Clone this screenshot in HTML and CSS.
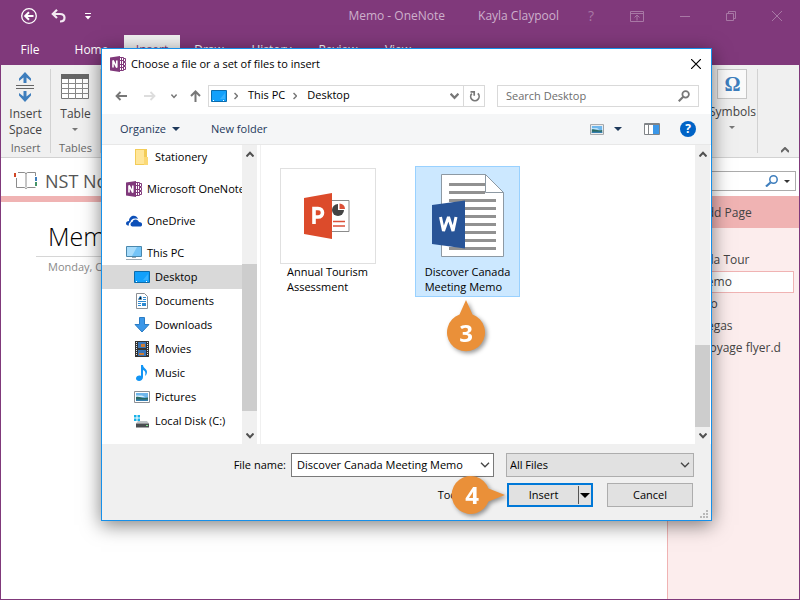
FILE: index.html
```html
<!DOCTYPE html>
<html lang="en">
<head>
<meta charset="utf-8">
<title>Memo - OneNote</title>
<link rel="stylesheet" href="styles.css">
</head>
<body>
<svg class="defs" aria-hidden="true">
  <symbol id="onenote" viewBox="0 0 16 16">
    <path fill="#fff" stroke="#80397b" d="M9 1.500h4.500v13H9"/>
    <path stroke="#80397b" d="M10 4.500h3.500M10 8.500h3.500M10 11.500h3.500M11.500 2v12" fill="none"/>
    <path fill="#fff" stroke="#80397b" d="M13.500 2.500h2v3h-2zM13.500 6.500h2v3h-2zM13.500 10.500h2v3h-2z"/>
    <path fill="#80397b" d="M0 1.500 10 0v16L0 14.500z"/>
    <path fill="none" stroke="#fff" stroke-width="1.600" d="M3 11.500V4.500l3.800 7V4.500"/>
  </symbol>
  <symbol id="chevron" viewBox="0 0 10 6"><path d="M1 .8 5 4.800 9 .8" fill="none" stroke="currentColor" stroke-width="1.300"/></symbol>
  <symbol id="bold-chevron" viewBox="0 0 8 6"><path d="M.5.5 4 4.200 7.500.5" fill="none" stroke="currentColor" stroke-width="2"/></symbol>
  <symbol id="caret" viewBox="0 0 8 4"><path d="M0 0h8L4 4z" fill="currentColor"/></symbol>
  <symbol id="desktop" viewBox="0 0 16 12"><path fill="#12a0fb" stroke="#0b6cad" d="M.5.5h15v11H.5z"/><path fill="#35b1ff" d="M9 9 14 3v6z"/><path stroke="#fff" stroke-dasharray="1 1" d="M2 10.500h2m8 0h2"/></symbol>
  <symbol id="picture" viewBox="0 0 16 12"><path fill="#fff" stroke="#8b8f94" d="M.5.5h15v11H.5z"/><path fill="#6fb7ec" d="M2 2h12v5H2z"/><path fill="#d8effc" d="M2 4.500h6l3 1.500H2z"/><path fill="#2a6a63" d="M2 6c4-1 5 2 12 .5V10H2z"/><path fill="#357fb0" d="M2 8.500h12V10H2z"/></symbol>
</svg>

<div class="app">
  <header class="titlebar">
    <div class="quick">
      <button aria-label="Back"><svg width="18" height="18" viewBox="0 0 18 18" fill="none" stroke="#fff"><circle cx="9" cy="9" r="7.300" stroke-width="1.300"/><path d="M13.500 9H5.500M9 5.200 5.200 9 9 12.800" stroke-width="2"/></svg></button>
      <button aria-label="Undo"><svg width="16" height="14" viewBox="0 0 16 14" fill="none" stroke="#f3e9f2" stroke-width="2.200"><path d="M2 5h7c6 0 6 7.500 0 7.500M6 .8 1.800 5 6 9"/></svg></button>
      <button aria-label="Customize"><svg width="6" height="7" viewBox="0 0 6 7" fill="#fff"><path d="M0 0h6v1H0zM0 3h6L3 6.500z"/></svg></button>
    </div>
    <span class="caption">Memo - OneNote</span>
    <span class="user">Kayla Claypool</span>
    <div class="winbtns">
      <button aria-label="Help" class="q">?</button>
      <button aria-label="Ribbon options"><svg width="14" height="11" viewBox="0 0 14 11" fill="none" stroke="currentColor"><path d="M.5.5h13v10H.5zM.5 2.500h13M7 9.500V4.500M4.500 6.500 7 4l2.500 2.500"/></svg></button>
      <button aria-label="Minimize"><svg width="10" height="11" viewBox="0 0 10 11" stroke="currentColor"><path d="M0 5.500h10"/></svg></button>
      <button aria-label="Restore"><svg width="10" height="10" viewBox="0 0 10 10" fill="none" stroke="currentColor"><path d="M.5 2.500h7v7h-7zM2.500 2.500v-2h7v7h-2"/></svg></button>
      <button aria-label="Close"><svg width="10" height="10" viewBox="0 0 10 10" stroke="currentColor"><path d="M0 0 10 10M10 0 0 10"/></svg></button>
    </div>
  </header>
  <nav class="tabs">
    <a href="#">File</a><a href="#">Home</a><a href="#" class="on">Insert</a><a href="#">Draw</a><a href="#">History</a><a href="#">Review</a><a href="#">View</a>
  </nav>
  <section class="ribbon">
    <div class="group">
      <button class="big"><svg width="18" height="32" viewBox="0 0 18 32"><path fill="#3e7ebd" d="M9 1 15 7.500v2.500l-4.500-3.500V12h-3V6.500L3 10V7.500zM9 31l6-6.500V22l-4.500 3.500V20h-3v5.500L3 22v2.500z"/><path stroke="#666" d="M0 14.500h18M0 17.500h18"/></svg><span>Insert<br>Space</span></button>
      <span class="gname">Insert</span>
    </div>
    <div class="group">
      <button class="big"><svg width="28" height="32" viewBox="0 0 28 32"><path fill="#fff" stroke="#777" d="M.5 3.500h27v24H.5z"/><path fill="#666" d="M0 3h28v5H0z"/><path stroke="#888" d="M0 12.500h28M0 17.500h28M0 22.500h28M7.500 8v20M14.500 8v20M21.500 8v20"/></svg><span>Table</span><svg class="drop" width="6" height="3"><use href="#caret"/></svg></button>
      <span class="gname">Tables</span>
    </div>
    <div class="group symbols">
      <button class="big"><span class="omega">Ω</span><span>Symbols</span><svg class="drop" width="6" height="3"><use href="#caret"/></svg></button>
    </div>
    <button class="collapse" aria-label="Collapse ribbon"><svg width="8" height="6" viewBox="0 0 8 6"><path d="M0 5 4 1l4 4" fill="none" stroke="#666" stroke-width="2"/></svg></button>
  </section>
  <div class="notebar">
    <svg width="24" height="20" viewBox="0 0 24 20" fill="none" stroke="#8c8c8c"><path d="M12 2v14M4 1.500h6c1 0 2 .5 2 1.500 0-1 1-1.500 2-1.500h7.500V5M2.500 7v9.500h7.500c1 0 2 .5 2 1.500 0-1 1-1.500 2-1.500h7.500"/><path stroke="#d24726" stroke-width="2" d="M1 2v4"/><path stroke="#3e7ebd" stroke-width="2" d="M22 6v4"/><path stroke="#439467" stroke-width="2" d="M22 11v4"/></svg>
    <h1>NST Notebook</h1>
    <label class="pagesearch"><input type="search" aria-label="Search notebook"><svg width="13" height="12" viewBox="0 0 13 12" fill="none" stroke="#3e7ebd"><circle cx="8.500" cy="4.500" r="3.700" stroke-width="1.500"/><path stroke-width="2.200" d="M5.500 7.500 1 11.500"/></svg><svg width="6" height="3"><use href="#caret"/></svg></label>
  </div>
  <main class="work">
    <article class="canvas">
      <h2>Memo</h2>
      <p>Monday, October 10</p>
    </article>
    <aside class="pages">
      <button class="add">⊕ Add Page</button>
      <ul>
        <li>Canada Tour</li>
        <li class="cur">Memo</li>
        <li>Mexico</li>
        <li>Las Vegas</li>
        <li>Bon voyage flyer.d</li>
      </ul>
    </aside>
  </main>
</div>

<section class="dialog" role="dialog" aria-labelledby="dlg-title">
  <header class="dhead">
    <svg width="16" height="16"><use href="#onenote"/></svg>
    <h2 id="dlg-title">Choose a file or a set of files to insert</h2>
    <button aria-label="Close dialog"><svg width="10" height="10" viewBox="0 0 10 10" stroke="#000" stroke-width="1.200"><path d="M0 0 10 10M10 0 0 10"/></svg></button>
  </header>
  <div class="navrow">
    <div class="arrows">
      <button aria-label="Back"><svg width="12" height="10" viewBox="0 0 12 10" fill="none" stroke="#777" stroke-width="1.800"><path d="M12 5H1.500M5.500 1l-4 4 4 4"/></svg></button>
      <button aria-label="Forward"><svg width="12" height="10" viewBox="0 0 12 10" fill="none" stroke="#ddd" stroke-width="1.800"><path d="M0 5h10.500M6.500 1l4 4-4 4"/></svg></button>
      <button aria-label="Recent"><svg width="6" height="5" color="#777"><use href="#bold-chevron"/></svg></button>
      <button aria-label="Up"><svg width="11" height="12" viewBox="0 0 11 12" fill="none" stroke="#777" stroke-width="2"><path d="M5.500 12V1.500M1 6l4.500-4.500L10 6"/></svg></button>
    </div>
    <div class="address">
      <svg width="16" height="12"><use href="#desktop"/></svg>
      <svg width="4" height="8" viewBox="0 0 4 8" fill="none" stroke="#777" stroke-width="1.500"><path d="M.5 1l3 3-3 3"/></svg>
      <a href="#">This PC</a>
      <svg width="4" height="8" viewBox="0 0 4 8" fill="none" stroke="#777" stroke-width="1.500"><path d="M.5 1l3 3-3 3"/></svg>
      <a href="#">Desktop</a>
      <button aria-label="Address history" class="hist"><svg width="9" height="7" color="#777"><use href="#bold-chevron"/></svg></button>
      <button aria-label="Refresh" class="refresh"><svg width="11" height="12" viewBox="0 0 11 12" fill="none" stroke="#777" stroke-width="1.700"><path d="M8.800 3.400a4.200 4.200 0 1 1-6 .2"/><path d="M1.500 1.800h3.700v4"/></svg></button>
    </div>
    <label class="find"><input type="search" placeholder="Search Desktop" aria-label="Search Desktop"><svg width="12" height="12" viewBox="0 0 11 11" fill="none" stroke="#777"><circle cx="7" cy="4" r="3" stroke-width="1.600"/><path stroke-width="2" d="M4.800 6.200.7 10.300"/></svg></label>
  </div>
  <div class="toolbar">
    <button>Organize <svg width="8" height="4"><use href="#caret"/></svg></button>
    <button>New folder</button>
    <button class="view" aria-label="Change view"><svg width="14" height="11"><use href="#picture"/></svg><svg width="8" height="4"><use href="#caret"/></svg></button>
    <button aria-label="Preview pane"><svg width="16" height="12" viewBox="0 0 16 12"><path fill="#fff" stroke="#808488" d="M.5.5h15v11H.5z"/><path fill="#808488" d="M1 1h14v1H1zM4 2h1v9H4z"/><path fill="#3b97e8" d="M9 2h6v9H9z"/></svg></button>
    <button aria-label="Help" class="help">?</button>
  </div>
  <div class="panes">
    <ul class="tree">
      <li class="sub"><svg width="16" height="16" viewBox="0 0 16 16"><path fill="#f3cc57" d="M1 0h12v16H1z"/><path fill="#ffe69a" d="M2 1h8v14H2z"/><path fill="#fbd976" d="M10 8h4v8h-4z"/></svg>Stationery</li>
      <li class="root"><svg width="16" height="16"><use href="#onenote"/></svg>Microsoft OneNote</li>
      <li class="root"><svg width="16" height="12" viewBox="0 0 16 12"><path fill="#0c4fb8" d="M3 10.500H2c-3-.5-2.500-4.500 1-4.500 0-5.500 7-7.500 9-2-5-1.500-7.500 1-7.500 3C3 7.500 2.500 9 3 10.500z"/><path fill="#0c4fb8" d="M4.500 9.500c0-2 1.500-2.500 2-2.500 1-3.500 5.500-3 6.500 0 4 0 4 4.500 1 4.500H6.500c-1 0-2-.7-2-2z"/></svg>OneDrive</li>
      <li class="root"><svg width="16" height="15" viewBox="0 0 16 15"><path fill="#74c4f7" stroke="#4a88ad" d="M.5.500h15v10H.5z"/><path fill="#a8dcfb" d="M1 1h10L6 10H1z"/><path fill="#9aa9b3" d="M6 11h4v1H6zM0 13h16v1H0z"/></svg>This PC</li>
      <li class="sub sel"><svg width="16" height="12"><use href="#desktop"/></svg>Desktop</li>
      <li class="sub"><svg width="16" height="16" viewBox="0 0 16 16"><path fill="#fff" stroke="#8b8f94" d="M2.500.5h8l3 3v12h-11z"/><path stroke="#2e8ad1" d="M4.500 6.500 6 3.500h1l.5 3M9 4.500h3M9 6.500h3M4 8.500h8M4 10.500h3M4 12.500h3"/><path fill="#2e8ad1" d="M8 10h4v3H8z"/></svg>Documents</li>
      <li class="sub"><svg width="16" height="16" viewBox="0 0 16 16"><path fill="#3b97e8" stroke="#2b7cc4" d="M5.500.5h5v7h4.500L8 15 1 7.500h4.500z"/></svg>Downloads</li>
      <li class="sub"><svg width="16" height="16" viewBox="0 0 16 16"><path fill="#333" d="M1 0h14v16H1z"/><path fill="#3875b8" d="M4 1h8v6H4zM4 9h8v6H4z"/><path fill="#cc7b34" d="M7 3h4v3H7zM5 12h5v2H5z"/><path stroke="#e8e8e8" stroke-width="1" stroke-dasharray="1 1" d="M2.500 1v14M13.500 1v14"/></svg>Movies</li>
      <li class="sub"><svg width="16" height="16" viewBox="0 0 16 16"><path fill="#1295f5" d="M7 0h2c0 3 4 4 4 7 0 2-1 3-2 4 1-4 0-5-2-6v7c0 5-7 5-7 1.500C2 11 5 10 7 11z"/></svg>Music</li>
      <li class="sub"><svg width="16" height="12"><use href="#picture"/></svg>Pictures</li>
      <li class="sub"><svg width="16" height="14" viewBox="0 0 16 14"><path fill="#17b1e8" d="M0 1h2.500v2.500H0zM3.500 1H6v2.500H3.500zM0 4.500h2.500V7H0zM3.500 4.500H6V7H3.500z"/><path fill="#bfc3c6" d="M4 7h9l2 2.500H2z"/><path fill="#4a4d50" d="M2 9.500h13v4H2z"/><path fill="#7fe58a" d="M12 11h2v1h-2z"/></svg>Local Disk (C:)</li>
    </ul>
    <div class="bar tree-bar">
      <svg class="up" width="8" height="6"><use href="#bold-chevron"/></svg><i></i><svg width="8" height="6"><use href="#bold-chevron"/></svg>
    </div>
    <div class="files">
      <figure>
        <div class="thumb"><svg width="48" height="48" viewBox="0 0 48 48"><path fill="#fff" stroke="#8b8b8b" d="M26 8.500h19v31H26z"/><circle cx="34" cy="18" r="6" fill="#444"/><path fill="#fff" d="M34 18v-8h8v8z"/><path fill="#dc5038" d="M35.500 17V11.500A5.500 5.500 0 0 1 41 17z"/><path stroke="#dc5038" stroke-width="1.600" d="M29 29.500h12M29 34h12"/><path fill="#dc4b2b" d="M0 6 28 1v46L0 42z"/><path fill="none" stroke="#fff" stroke-width="3.600" d="M10 32V16.500h4c6 0 6 8.500 0 8.500h-3"/></svg></div>
        <figcaption>Annual Tourism<br>Assessment</figcaption>
      </figure>
      <figure class="picked">
        <div class="thumb"><svg width="74" height="84" viewBox="0 0 74 84"><path fill="#fff" stroke="#8d99a3" d="M10.500.5h44l18 18v64h-62z"/><path stroke="#919191" stroke-width="3" d="M18 10.500h36M18 18.500h36M18 26.500h47M18 34.500h47M18 42.500h47M18 50.500h47M18 58.500h47M18 66.500h47M18 74.500h47"/><path fill="#fff" stroke="#8d99a3" d="M54.500.5v18h18z"/><path fill="#285497" d="M1 31 34 26.500v48L1 70z"/><path fill="none" stroke="#fff" stroke-width="3" stroke-linejoin="bevel" d="M9.500 43l3 14L17.500 43l4.500 14L25 43"/></svg></div>
        <figcaption>Discover Canada<br>Meeting Memo</figcaption>
        <div class="pin three"><svg width="46" height="58" viewBox="0 0 46 58"><path fill="#ea9039" d="M22 1 28.500 15.500a19 19 0 1 1-13 0z"/></svg><b>3</b></div>
      </figure>
    </div>
    <div class="bar file-bar">
      <svg class="up" width="8" height="6"><use href="#bold-chevron"/></svg><i></i><svg width="8" height="6"><use href="#bold-chevron"/></svg>
    </div>
  </div>
  <footer class="dfoot">
    <label class="fname" for="fname">File name:</label>
    <div class="combo"><input id="fname" value="Discover Canada Meeting Memo"><svg width="10" height="6"><use href="#chevron"/></svg></div>
    <div class="combo type"><select aria-label="File type"><option>All Files</option></select><svg width="10" height="6"><use href="#chevron"/></svg></div>
    <button class="tools">Tools</button>
    <div class="actions">
      <div class="split">
        <button>Insert</button><button aria-label="Insert options" class="more"><svg width="10" height="5" viewBox="0 0 8 4"><use href="#caret"/></svg></button>
        <div class="pin four"><svg width="58" height="46" viewBox="0 0 58 46"><path fill="#ea9039" d="M55 22 38.500 28.500a19 19 0 1 1 0-13z"/></svg><b>4</b></div>
      </div>
      <button class="cancel">Cancel</button>
    </div>
    <svg class="grip" width="9" height="9" viewBox="0 0 9 9" fill="#b8b8b8"><path d="M6 0h2v2H6zM3 3h2v2H3zM6 3h2v2H6zM0 6h2v2H0zM3 6h2v2H3zM6 6h2v2H6z"/></svg>
  </footer>
</section>
</body>
</html>
```
FILE: styles.css
```css
* { box-sizing: border-box; }
body {
  margin: 0;
  position: relative;
  font-family: "Open Sans", "Noto Sans", sans-serif;
  font-size: 11px;
  line-height: 16px;
  color: #000;
}
h1, h2, p, ul, figure { margin: 0; padding: 0; font-weight: 400; }
ul { list-style: none; }
a { color: inherit; text-decoration: none; }
button { font: inherit; color: inherit; background: none; border: 0; padding: 0; }
input, select { font: inherit; color: inherit; border: 0; outline: 0; background: none; min-width: 0; padding: 0; border-radius: 0; appearance: none; }
svg { flex: none; display: block; }
.defs { position: absolute; width: 0; height: 0; }

/* Application window */
.app {
  min-height: 100vh;
  display: flex;
  flex-direction: column;
  border: 1px solid #80397b;
  border-top: 0;
  background: #fff;
}
.titlebar { height: 35px; background: #80397b; color: #cdb0cb; display: flex; align-items: center; font-size: 12px; padding: 0 17px 3px 0; }
.quick { display: flex; align-items: center; gap: 13px; padding-left: 19px; }
.quick button:last-child { padding-left: 5px; }
.caption { margin-left: auto; }
.user { margin-left: 33px; }
.winbtns { display: flex; align-items: center; gap: 36px; margin-left: 29px; color: #a878a5; }
.winbtns .q { font-size: 14px; }
.tabs {
  display: grid;
  grid-template-columns: 58px 65px 56px 58px 67px 66px 54px;
  height: 30px;
  line-height: 30px;
  background: #80397b;
  color: #fff;
  font-size: 12px;
  text-align: center;
}
.tabs .on { background: #f0f0f0; color: #80397b; }
.ribbon { display: flex; height: 93px; background: #f0f0f0; border-bottom: 1px solid #d2d2d2; color: #444; padding: 4px 0 0; }
.group { width: 50px; border-right: 1px solid #d2d2d2; margin-bottom: 4px; display: flex; flex-direction: column; align-items: center; }
.big { display: flex; flex-direction: column; align-items: center; font-size: 12px; }
.big > svg:first-child { margin: 2px 0 3px; }
.drop { margin-top: 6px; color: #777; }
.gname { margin: auto 0 -3px; line-height: 16px; color: #666; }
.symbols { margin-left: auto; }
.omega { width: 30px; height: 30px; margin-bottom: 5px; border: 1px solid #c6c6c6; background: #fafafa; color: #3e7ebd; font: bold 20px/28px "Liberation Serif", serif; }
.collapse { width: 41px; padding-left: 23px; align-self: flex-end; height: 14px; }
.notebar { display: flex; align-items: center; height: 38px; padding: 0 3px 0 13px; }
.notebar h1 { font-size: 18px; line-height: 24px; color: #555; margin-left: 7px; padding-top: 8px; }
.notebar > svg { margin-top: 8px; }
.pagesearch { display: flex; align-items: center; gap: 6px; width: 128px; height: 20px; margin: 8px 0 0 auto; border: 1px solid #ababab; padding-right: 5px; color: #333; }
.pagesearch input { flex: 1; }
.work { flex: 1; display: flex; }
.canvas { flex: 1; border-top: 6px solid #f0b3b3; padding: 16px 0 0 35px; }
.canvas h2 { font-size: 25px; line-height: 36px; font-weight: 300; padding: 0 0 2px 12px; border-bottom: 1px solid #d6d6d6; width: 300px; }
.canvas p { padding: 2px 0 0 12px; color: #8a8a8a; }
.pages { width: 132px; border-left: 1px solid #f0b3b3; background: #fceded; color: #444; font-size: 12px; }
.add { display: block; width: 100%; height: 32px; background: #f0b3b3; padding: 2px 0 0 18px; text-align: left; }
.pages ul { padding: 21px 5px 0 10px; line-height: 22px; }
.cur { border: 1px solid #f0b3b3; background: #fff; padding-left: 17px; line-height: 20px; }

/* File dialog */
.dialog {
  position: absolute;
  inset: 48px 88px 79px 101px;
  display: flex;
  flex-direction: column;
  border: 1px solid #1690ea;
  background: #fff;
  box-shadow: 0 4px 18px rgba(0, 0, 0, .5);
}
.dhead { display: flex; align-items: center; height: 29px; padding: 0 10px 0 8px; }
.dhead h2 { font-size: 11px; line-height: 16px; margin: 0 auto 0 5px; }
.navrow { display: flex; height: 22px; margin: 7px 12px 7px 13px; }
.arrows { display: flex; align-items: center; width: 93px; gap: 17px; }
.arrows button:nth-child(3) { margin-left: -2px; }
.arrows button:nth-child(4) { margin-left: -4px; }
.address { flex: 1; display: flex; align-items: center; border: 1px solid #d9d9d9; padding-left: 2px; gap: 7px; }
.address a { padding: 0 1px 2px 3px; }
.hist { margin-left: auto; }
.hist + .refresh { margin-left: -3px; }
.refresh { height: 20px; width: 21px; padding-left: 5px; border-left: 1px solid #d9d9d9; }
.find { display: flex; align-items: center; width: 202px; margin-left: 12px; border: 1px solid #d9d9d9; padding: 0 8px; }
.find input { flex: 1; }
.find input::placeholder { color: #6d6d6d; }
.toolbar { display: flex; align-items: center; height: 31px; padding: 0 15px 0 18px; gap: 31px; background: #f5f6f7; border-bottom: 1px solid #e8e8e8; color: #1e395b; }
.toolbar button { display: flex; align-items: center; gap: 6px; }
.toolbar .view { margin-left: auto; gap: 10px; }
.toolbar button:nth-child(4) { margin-left: -9px; }
.toolbar .help { width: 16px; height: 16px; margin-left: -11px; border-radius: 50%; background: #0063c6; color: #fff; font-weight: 700; font-size: 12px; justify-content: center; }
.panes { flex: 1; display: flex; min-height: 0; padding-right: 1px; }
.tree { width: 140px; overflow: hidden; white-space: nowrap; }
.tree li { display: flex; align-items: center; height: 24px; gap: 5px; padding-left: 32px; }
.tree .root { padding-left: 24px; margin-top: 8px; }
.tree .sel { background: #d9d9d9; }
.bar { width: 15px; background: #f0f0f0; color: #505050; display: flex; flex-direction: column; align-items: center; padding: 6px 0 5px; }
.bar i { width: 15px; background: #cdcdcd; }
.bar .up { transform: rotate(180deg); }
.bar svg:last-child { margin-top: auto; }
.tree-bar i { height: 147px; margin-top: 107px; }
.file-bar i { height: 82px; margin-top: 188px; }
.files { flex: 1; display: flex; align-items: flex-start; gap: 35px; margin-left: 3px; padding: 21px 0 0 14px; border-left: 1px solid #f0f0f0; }
figure { position: relative; width: 105px; display: flex; flex-direction: column; align-items: center; border: 1px solid transparent; padding: 1px 0 2px; }
.thumb { width: 96px; height: 96px; display: grid; place-items: center; border: 1px solid #e0e0e0; }
figcaption { line-height: 15px; white-space: nowrap; }
.picked { background: #cce8ff; border-color: #99d1ff; }
.picked .thumb { border-color: transparent; }
.dfoot {
  position: relative;
  display: grid;
  grid-template-columns: 184px 1fr 188px;
  gap: 6px 0;
  padding: 9px 17px 13px 0;
  background: #f0f0f0;
}
.fname { text-align: right; line-height: 24px; }
.combo { display: flex; align-items: center; height: 24px; margin: 0 12px 0 5px; background: #fff; border: 1px solid #7a7a7a; padding: 0 3px 0 5px; color: #444; }
.combo input, .combo select { flex: 1; color: #000; }
.type { background: #e1e1e1; border-color: #adadad; margin: 0; padding-left: 3px; }
.tools { grid-column: 2; justify-self: end; padding-right: 41px; }
.actions { display: flex; justify-content: space-between; padding: 0 1px; }
.split { position: relative; display: flex; width: 86px; height: 24px; border: 2px solid #0078d7; background: #e1e1e1; }
.split > button:first-child { flex: 1; }
.more { width: 13px; border-left: 1px solid #555; padding-left: 1px; margin: 1px 0; }
.cancel { width: 86px; height: 24px; background: #e1e1e1; border: 1px solid #adadad; }
.grip { position: absolute; right: 2px; bottom: 1px; }
.pin { position: absolute; filter: drop-shadow(2px 2px 2px rgba(0, 0, 0, .4)); }
.pin b { position: absolute; width: 40px; text-align: center; color: #fff; font-size: 24px; line-height: 32px; }
.three { left: 28px; top: 132px; }
.three b { left: 2px; top: 18px; }
.four { left: -59px; top: -12px; }
.four b { left: 2px; top: 6px; }
```
